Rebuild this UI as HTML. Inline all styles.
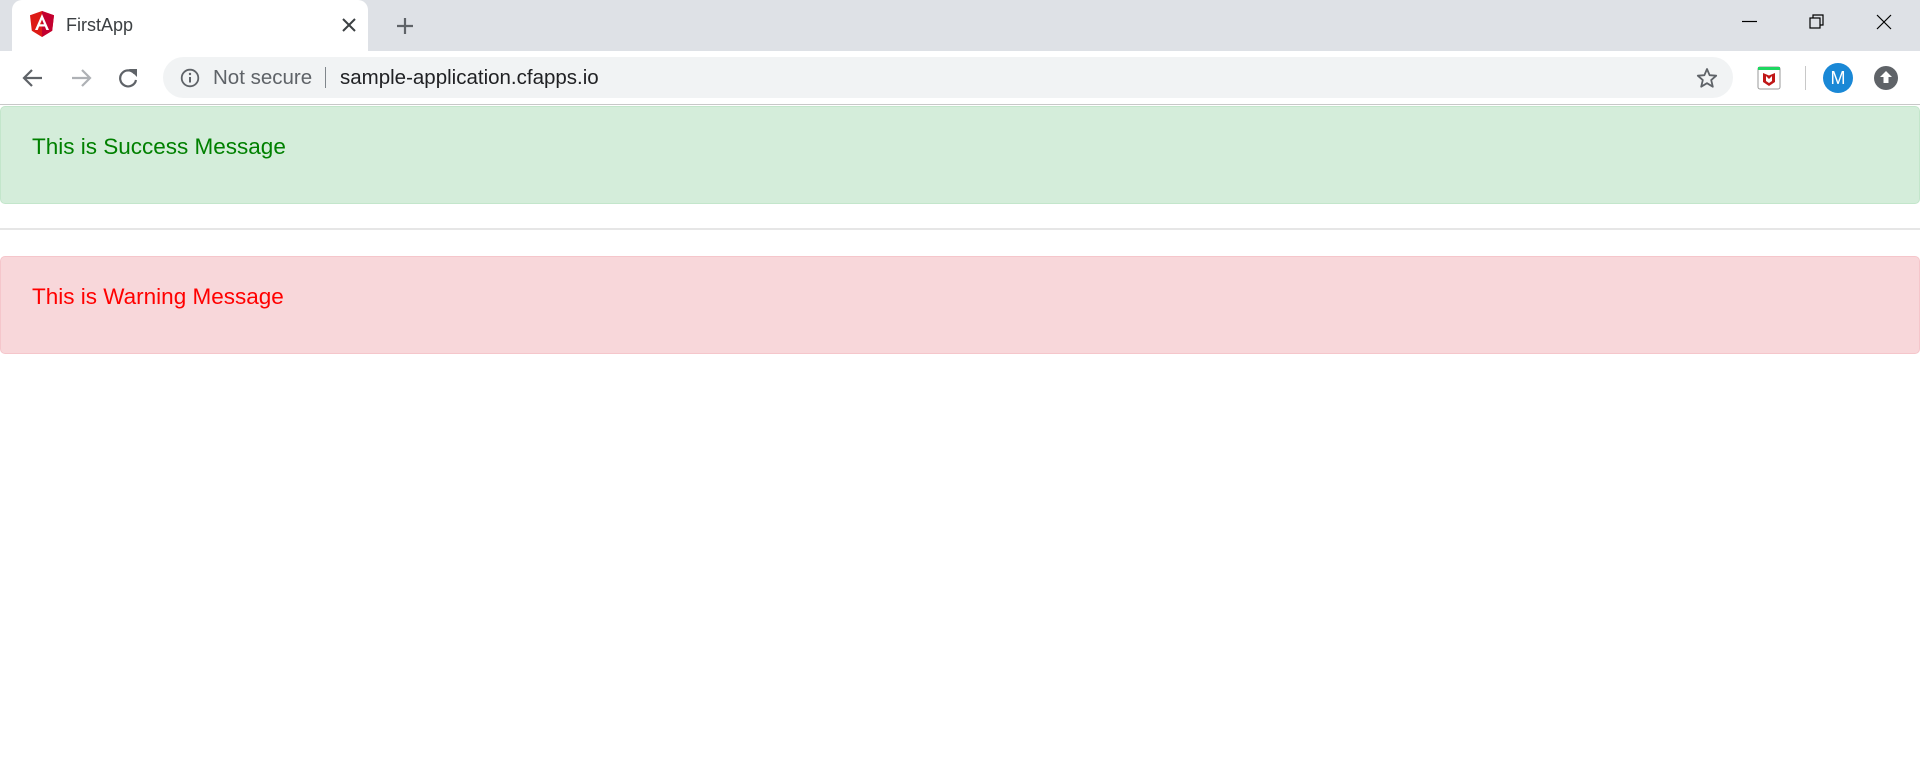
<!DOCTYPE html>
<html><head><meta charset="utf-8"><style>
*{box-sizing:border-box;margin:0;padding:0}
body{width:1920px;height:771px;overflow:hidden;background:#fff;font-family:"Liberation Sans",sans-serif;position:relative}
.strip{position:absolute;left:0;top:0;width:1920px;height:51px;background:#dee1e6}
.tab{position:absolute;left:12px;top:0;width:356px;height:51px;background:#fff;border-radius:10px 10px 0 0}
.tab .t{position:absolute;left:54px;top:15px;font-size:18px;color:#3c4043}
.tool{position:absolute;left:0;top:51px;width:1920px;height:54px;background:#fff;border-bottom:1px solid #c8c8c8}
.omni{position:absolute;left:163px;top:6px;width:1570px;height:41px;background:#f1f3f4;border-radius:21px}
.ns{position:absolute;left:50px;top:9px;font-size:20.5px;color:#5f6368}
.url{position:absolute;left:177px;top:9px;font-size:20.5px;color:#202124}
.div{position:absolute;left:162px;top:10px;width:1px;height:21px;background:#80868b}
.alert{position:absolute;left:0;width:1920px;height:98px;border:1px solid;border-radius:5px;font-size:22.5px;padding:27px 0 0 31px}
svg{position:absolute}
</style></head><body>
<div class="strip">
 <div class="tab">
  <svg style="left:18px;top:11px" width="24" height="26" viewBox="0 0 24 26"><path d="M12 0L0 4.3l1.8 15.4L12 26l10.2-6.3L24 4.3z" fill="#dd1b16"/><path d="M12 0v26l10.2-6.3L24 4.3z" fill="#c3002f"/><path d="M12 3L5 19h2.7l1.4-3.5h5.8l1.4 3.5H19zm-2 10.3L12 8.5l2 4.8z" fill="#fff"/></svg>
  <div class="t">FirstApp</div>
  <svg style="left:330px;top:18px" width="14" height="14"><path d="M1 1L13 13M13 1L1 13" stroke="#3c4043" stroke-width="2"/></svg>
 </div>
 <svg style="left:396px;top:17px" width="18" height="18"><path d="M9 1v16M1 9h16" stroke="#5f6368" stroke-width="2.2"/></svg>
 <svg style="left:1742px;top:20px" width="16" height="4"><path d="M0 1.5h15" stroke="#000" stroke-width="1.2"/></svg>
 <svg style="left:1809px;top:14px" width="16" height="16"><rect x="1" y="4" width="10" height="10" fill="none" stroke="#000" stroke-width="1.2"/><path d="M4 4V1h10v10h-3" fill="none" stroke="#000" stroke-width="1.2"/></svg>
 <svg style="left:1876px;top:14px" width="16" height="16"><path d="M1 1L15 15M15 1L1 15" stroke="#000" stroke-width="1.2"/></svg>
</div>
<div class="tool">
 <svg style="left:22px;top:17px" width="22" height="20"><path d="M20 10H3M10 2L2 10l8 8" fill="none" stroke="#5f6368" stroke-width="2.2"/></svg>
 <svg style="left:70px;top:17px" width="22" height="20"><path d="M2 10h17M12 2l8 8-8 8" fill="none" stroke="#aeb1b5" stroke-width="2.2"/></svg>
 <svg style="left:117px;top:16px" width="22" height="22"><path d="M17.5 6.5A8 8 0 1 0 19 13" fill="none" stroke="#5f6368" stroke-width="2.2"/><path d="M12 2h8v8z" fill="#5f6368"/></svg>
 <div class="omni">
  <svg style="left:17px;top:11px" width="20" height="20"><circle cx="10" cy="10" r="8.3" fill="none" stroke="#5f6368" stroke-width="1.8"/><path d="M10 9v5.5" stroke="#5f6368" stroke-width="2"/><circle cx="10" cy="6" r="1.2" fill="#5f6368"/></svg>
  <div class="ns">Not secure</div><div class="div"></div>
  <div class="url">sample-application.cfapps.io</div>
  <svg style="left:1533px;top:10px" width="22" height="22"><path d="M11 2l2.6 6.2 6.6.5-5 4.4 1.6 6.6L11 16.2l-5.8 3.5 1.6-6.6-5-4.4 6.6-.5z" fill="none" stroke="#5f6368" stroke-width="1.8" stroke-linejoin="round"/></svg>
 </div>
 <svg style="left:1757px;top:15px" width="24" height="24"><rect x="1" y="1" width="22" height="22" rx="2" fill="#fff" stroke="#999"/><rect x="1" y="1" width="22" height="3" fill="#1ed760"/><path d="M6 7l6 2.5L18 7v9l-6 4-6-4z" fill="#c01818"/><path d="M9 10v5l3 2 3-2v-5l-3 3z" fill="#fff"/></svg>
 <div style="position:absolute;left:1805px;top:15px;width:1px;height:24px;background:#c8c8c8"></div>
 <div style="position:absolute;left:1823px;top:12px;width:30px;height:30px;border-radius:50%;background:#1a88d6;color:#fff;font-size:18px;text-align:center;line-height:30px">M</div>
 <svg style="left:1874px;top:15px" width="24" height="24"><circle cx="12" cy="12" r="12" fill="#5f6368"/><path d="M12 5l6 6h-3.5v6h-5v-6H6z" fill="#fff"/></svg>
</div>
<div class="alert" style="top:106px;background:#d4edda;border-color:#c3e6cb;color:#008000">This is Success Message</div>
<div style="position:absolute;left:0;top:228px;width:1920px;height:2px;background:#e6e6e6"></div>
<div class="alert" style="top:256px;background:#f8d7da;border-color:#f5c6cb;color:#ff0000">This is Warning Message</div>
</body></html>
